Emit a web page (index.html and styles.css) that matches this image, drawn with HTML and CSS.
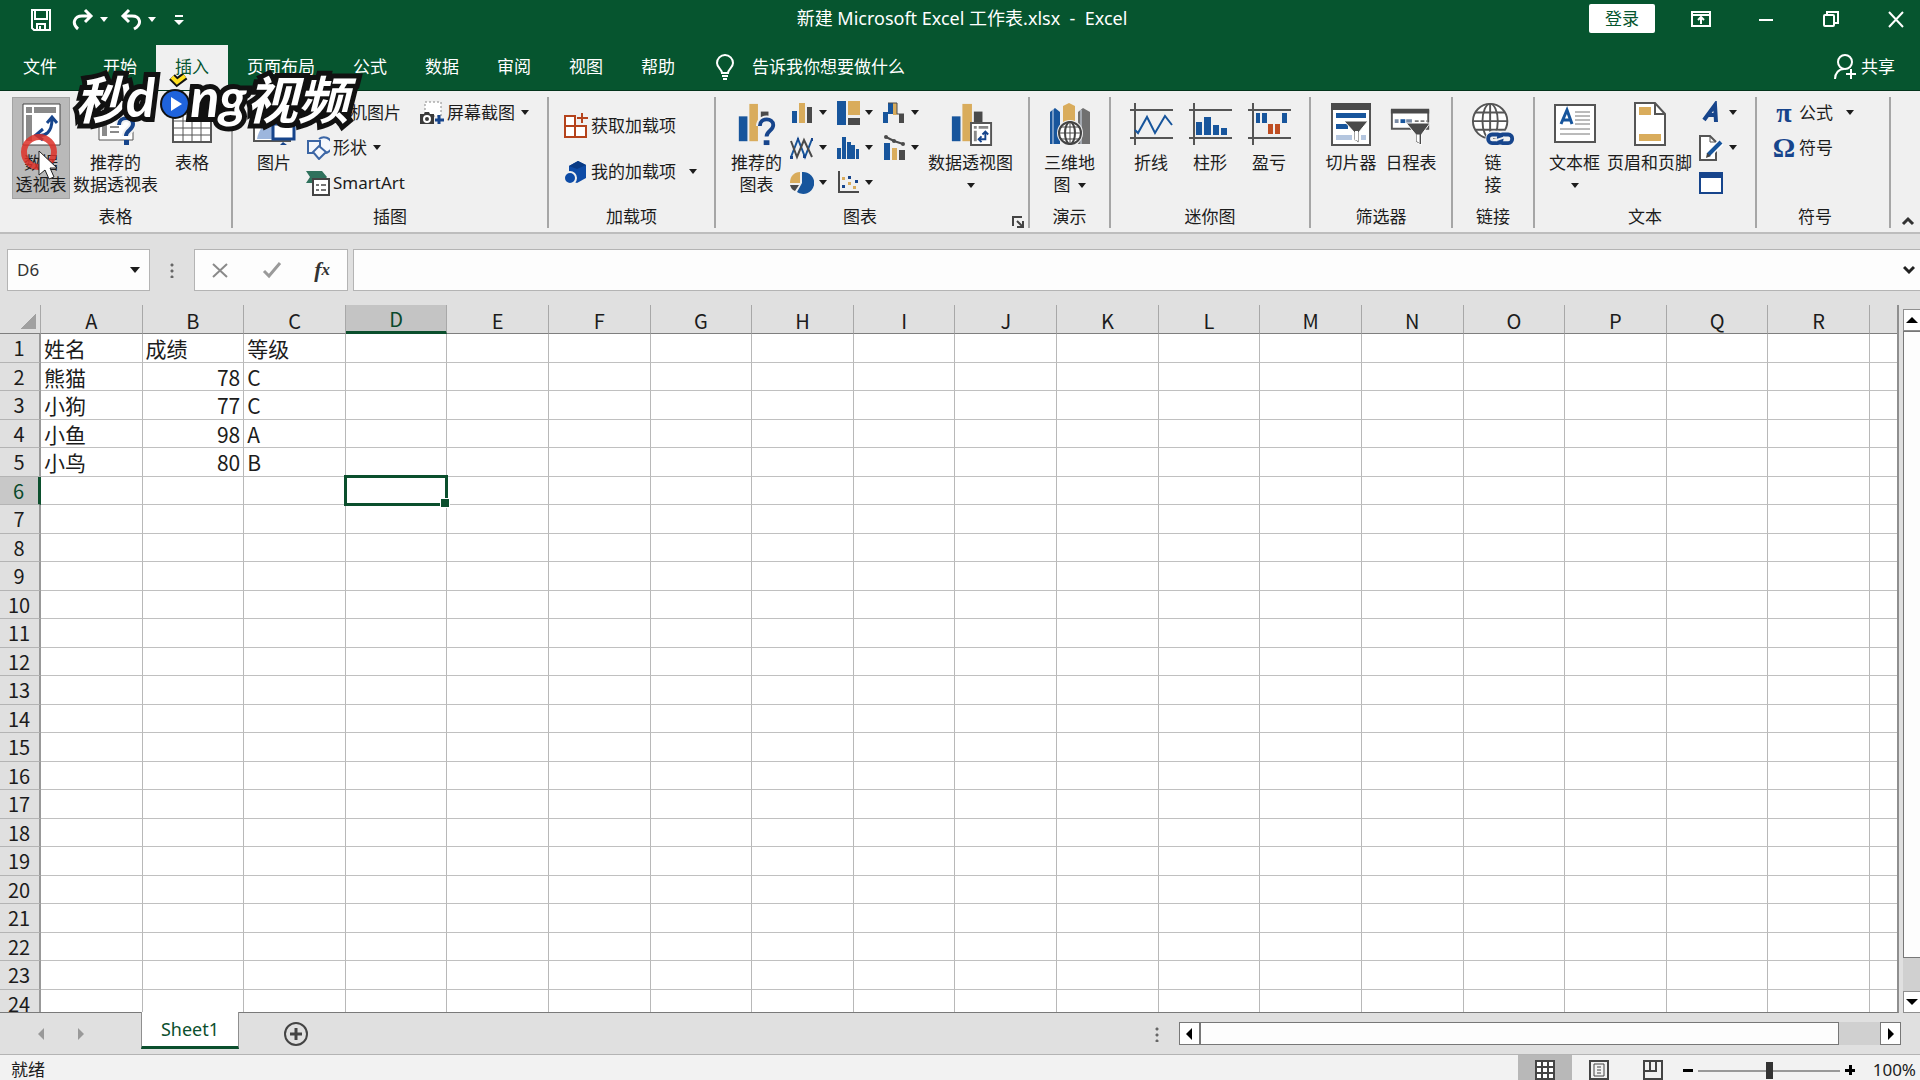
FILE: index.html
```html
<!DOCTYPE html>
<html lang="zh-CN">
<head>
    <meta charset="UTF-8">
    <meta name="viewport" content="width=device-width, initial-scale=1.0">
    <title>新建 Microsoft Excel 工作表.xlsx - Excel</title>
    <link rel="stylesheet" href="styles.css">
</head>
<body>
    <header class="titlebar">
        <div class="quick">
            <button class="save" aria-label="保存"><svg width="22" height="24" viewBox="0 0 22 24" fill="none" stroke="#fff" stroke-width="2"><path d="M2 2h18v20H4l-2-2zM5 2v9h12V2M7 22v-6h8v6M10 18v4"/></svg></button>
            <button class="redo" aria-label="恢复"><svg width="22" height="24" viewBox="0 0 22 24" fill="none" stroke="#fff" stroke-width="3"><path d="M6 21C-1 15 3 8 10 8h8M13 2l6 6-6 6"/></svg><i class="caret"></i></button>
            <button class="undo" aria-label="撤消"><svg width="22" height="24" viewBox="0 0 22 24" fill="none" stroke="#fff" stroke-width="3"><path d="M14 21C23 16 20 8 12 8H4M9 2L3 8l6 6"/></svg><i class="caret"></i></button>
            <button class="more" aria-label="自定义"><svg width="10" height="12" viewBox="0 0 10 12" fill="#fff"><path d="M1 1h8v2H1zM0 6h10l-5 5z"/></svg></button>
        </div>
        <div class="doc-title">新建 Microsoft Excel 工作表.xlsx&nbsp; -&nbsp; Excel</div>
        <div class="window-buttons">
            <button class="login">登录</button>
            <button aria-label="功能区选项"><svg width="20" height="18" viewBox="0 0 20 18" fill="none" stroke="#fff" stroke-width="2"><path d="M1 2h18v14H1zM1 5h18M10 14V8M7 10l3-3 3 3"/></svg></button>
            <button aria-label="最小化"><svg width="20" height="18" viewBox="0 0 20 18" stroke="#fff" stroke-width="2"><path d="M3 10h14"/></svg></button>
            <button aria-label="还原"><svg width="20" height="18" viewBox="0 0 20 18" fill="none" stroke="#fff" stroke-width="2"><rect x="3" y="5" width="10" height="11" rx="1"/><path d="M6 5V2h11v11h-4"/></svg></button>
            <button aria-label="关闭"><svg width="20" height="18" viewBox="0 0 20 18" stroke="#fff" stroke-width="2"><path d="M3 2l14 15M17 2L3 17"/></svg></button>
        </div>
    </header>

    <nav class="tabs">
        <button class="tab file">文件</button>
        <button class="tab">开始</button>
        <button class="tab active">插入</button>
        <button class="tab">页面布局</button>
        <button class="tab">公式</button>
        <button class="tab">数据</button>
        <button class="tab">审阅</button>
        <button class="tab">视图</button>
        <button class="tab">帮助</button>
        <button class="tell"><svg width="18" height="26" viewBox="0 0 18 26" fill="none" stroke="#fff" stroke-width="2"><path d="M6 19c0-4-5-5-5-10a8 8 0 0 1 16 0c0 5-5 6-5 10zM6 22h6M7 25h4"/></svg>告诉我你想要做什么</button>
        <button class="share"><svg width="22" height="26" viewBox="0 0 22 26" fill="none" stroke="#fff" stroke-width="2"><circle cx="11" cy="8" r="7"/><path d="M1 25c0-6 4-10 9-10M17 15v10M12 20h10"/></svg>共享</button>
    </nav>

    <section class="ribbon">
        <div class="group">
            <div class="items g-tables">
                <button class="big pressed">
                    <svg width="40" height="44" viewBox="0 0 40 44"><path d="M2 2h37v41H2z" fill="#fff" stroke="#444" stroke-width="1"/><path d="M5 5h6v6H5zM13 5h22v6H13zM5 13h6v26H5z" fill="#8a8a8a"/><path d="M15 33c10 2 16-3 16-16M26 21l5-6 5 6M22 27l-7 6 7 5" fill="none" stroke="#17458c" stroke-width="3"/></svg>
                    <span>数据</span><span>透视表</span>
                </button>
                <button class="big">
                    <svg width="40" height="44" viewBox="0 0 40 44"><path d="M3 2h34v36H3z" fill="#fff" stroke="#555"/><path d="M6 5h5v5H6zM13 5h20v5H13zM6 13h5v21H6zM14 24h9v2h-9zM14 29h9v2h-9z" fill="#8a8a8a"/><path d="M23 23c0-9 14-9 14-1 0 6-7 6-7 12" fill="none" stroke="#f0f0f0" stroke-width="8"/><path d="M23 23c0-9 14-9 14-1 0 6-7 6-7 12" fill="none" stroke="#17458c" stroke-width="4"/><path d="M28 38h5v5h-5z" fill="#17458c"/></svg>
                    <span>推荐的</span><span>数据透视表</span>
                </button>
                <button class="big">
                    <svg width="40" height="44" viewBox="0 0 40 44" fill="none" stroke="#555" stroke-width="2"><path d="M1 4h38v36H1z" fill="#fff"/><path d="M1 12h38M1 19h38M1 26h38M1 33h38M11 12v28M20 12v28M29 12v28" stroke-width="1"/></svg>
                    <span>表格</span>
                </button>
            </div>
            <div class="label">表格</div>
        </div>

        <div class="group">
            <div class="items g-pics">
                <button class="big">
                    <svg width="44" height="44" viewBox="0 0 44 44"><path d="M2 4h36v35H2z" fill="#fff" stroke="#555" stroke-width="2"/><path d="M5 37c1-9 9-18 15-19v19z" fill="#9db6dd"/><path d="M21 22h21v15H21z" fill="#fff" stroke="#17458c" stroke-width="3"/><path d="M28 43l3-3 4 3z" fill="#17458c"/></svg>
                    <span>图片</span>
                </button>
                <div class="stack">
                    <button class="small"><svg width="24" height="24" viewBox="0 0 24 24" fill="#fff" stroke="#555"><path d="M2 3h20v17H2z"/></svg>联机图片</button>
                    <button class="small"><svg width="24" height="24" viewBox="0 0 24 24" fill="#f4f7fc" stroke="#3c66a5" stroke-width="2"><path d="M13 3a8 8 0 1 1 3 14"/><path d="M2 5h12v12H2z"/><path d="M13 10l7 6-7 7-6-7z"/></svg>形状<i class="caret"></i></button>
                    <button class="small"><svg width="24" height="26" viewBox="0 0 24 26"><path d="M0 1h16l5 6-5 6H0l4-6z" fill="#2f715c"/><path d="M7 9h16v16H7z" fill="#fff" stroke="#444" stroke-width="2"/><path d="M10 14h3v2h-3zM15 14h5v2h-5zM10 19h3v2h-3zM15 19h5v2h-5z" fill="#777"/></svg>SmartArt</button>
                </div>
                <div class="stack">
                    <button class="small"><svg width="24" height="24" viewBox="0 0 24 24"><path d="M5 1h16v14H5z" fill="#fff" stroke="#888" stroke-dasharray="2 2"/><path d="M0 13h4l1-2h4l1 2h4v10H0z" fill="#3a3a3a"/><circle cx="7" cy="18" r="3" fill="none" stroke="#fff" stroke-width="2"/><path d="M19 14v9M15 19h9" stroke="#17458c" stroke-width="3"/></svg>屏幕截图<i class="caret"></i></button>
                </div>
            </div>
            <div class="label">插图</div>
        </div>

        <div class="group">
            <div class="items g-addins">
                <button class="small"><svg width="24" height="26" viewBox="0 0 24 26" fill="#fff" stroke="#b5431c" stroke-width="2"><path d="M1 3h10v10H1zM1 13h10v11H1zM11 13h11v11H11z"/><path d="M18 0v10M13 5h11"/></svg>获取加载项</button>
                <button class="small"><svg width="24" height="26" viewBox="0 0 24 26"><path d="M5 7l9-5 8 4v13l-9 5-8-3z" fill="#0d4ba6"/><path d="M5 7l9-5 8 4-9 4z" fill="#083a85"/><circle cx="6" cy="19" r="6" fill="#0d4ba6" stroke="#f0f0f0" stroke-width="2"/></svg>我的加载项<i class="caret far"></i></button>
            </div>
            <div class="label">加载项</div>
        </div>

        <div class="group charts">
            <div class="items g-charts">
                <button class="big">
                    <svg width="42" height="46" viewBox="0 0 42 46"><path d="M2 15h9v26H2z" fill="#17559c"/><path d="M13 2h9v39h-9z" fill="#d9ac5c"/><path d="M25 10h8v6h-8z" fill="#4a4a4a"/><path d="M24 25c0-9 14-9 14-1 0 6-7 6-7 12" fill="none" stroke="#f0f0f0" stroke-width="8"/><path d="M24 25c0-9 14-9 14-1 0 6-7 6-7 12" fill="none" stroke="#17458c" stroke-width="4"/><path d="M28 40h6v5h-6z" fill="#17458c"/></svg>
                    <span>推荐的</span><span>图表</span>
                </button>
                <div class="minis">
                    <button class="mini" aria-label="柱形图"><svg width="24" height="26" viewBox="0 0 24 26"><path d="M2 11h5v12H2z" fill="#17559c"/><path d="M9 3h6v20H9z" fill="#d9ac5c"/><path d="M17 7h5v16h-5z" fill="#4a4a4a"/></svg><i class="caret"></i></button>
                    <button class="mini" aria-label="层次结构图"><svg width="24" height="26" viewBox="0 0 24 26"><path d="M1 1h9v24H1z" fill="#17559c"/><path d="M12 1h12v14H12z" fill="#d9ac5c"/><path d="M12 18h12v7H12z" fill="#4a4a4a"/></svg><i class="caret"></i></button>
                    <button class="mini" aria-label="瀑布图"><svg width="24" height="26" viewBox="0 0 24 26"><path d="M1 12h5v11H1zM6 3h5v11H6z" fill="#17559c"/><path d="M11 3h4v12h-4z" fill="#d9ac5c"/><path d="M17 14h5v9h-5z" fill="#4a4a4a"/><path d="M6 3h9v11h7" fill="none" stroke="#4a4a4a"/></svg><i class="caret"></i></button>
                    <button class="mini" aria-label="折线图"><svg width="24" height="26" viewBox="0 0 24 26" fill="none" stroke-width="2"><path d="M1 22L8 4l7 18 7-18" stroke="#17559c"/><path d="M1 6l6 16 7-17 8 17" stroke="#4a4a4a"/><path d="M0 21h3v3H0zM13 20h3v3h-3zM21 3h2v3h-2zM7 3h2v3H7z" fill="#17458c"/></svg><i class="caret"></i></button>
                    <button class="mini" aria-label="统计图"><svg width="24" height="26" viewBox="0 0 24 26" fill="#17559c"><path d="M1 13h4v11H1zM6 2h4v22H6zM11 7h4v17h-4zM15 10h4v14h-4zM20 14h3v10h-3z"/></svg><i class="caret"></i></button>
                    <button class="mini" aria-label="组合图"><svg width="24" height="26" viewBox="0 0 24 26"><path d="M2 8h6v17H2z" fill="#17559c"/><path d="M10 13h5v12h-5z" fill="#d9ac5c"/><path d="M17 15h6v10h-6z" fill="#4a4a4a"/><path d="M4 2l8 4 9 3" fill="none" stroke="#4a4a4a" stroke-width="2"/><circle cx="4" cy="2" r="2" fill="#4a4a4a"/><circle cx="12" cy="6" r="2" fill="#4a4a4a"/><circle cx="21" cy="9" r="2" fill="#4a4a4a"/></svg><i class="caret"></i></button>
                    <button class="mini" aria-label="饼图"><svg width="24" height="26" viewBox="0 0 24 26"><path d="M12 2a11 11 0 1 1-5 20l5-9z" fill="#17559c"/><path d="M10 2v11H0C0 6 4 2 10 2z" fill="#d9ac5c"/><path d="M0 15h9l-4 6c-3-1-4-3-5-6z" fill="#4a4a4a"/></svg><i class="caret"></i></button>
                    <button class="mini" aria-label="散点图"><svg width="24" height="26" viewBox="0 0 24 26"><path d="M3 1v21h20" fill="none" stroke="#4a4a4a" stroke-width="2"/><path d="M12 6h3v3h-3zM19 10h3v3h-3zM6 15h3v3H6z" fill="#17458c"/><path d="M6 7h3v3H6zM12 12h3v3h-3zM17 16h3v3h-3z" fill="#d9ac5c"/></svg><i class="caret"></i></button>
                </div>
                <button class="big">
                    <svg width="44" height="46" viewBox="0 0 44 46"><path d="M2 15h9v26H2z" fill="#17559c"/><path d="M13 2h10v39H13z" fill="#d9ac5c"/><path d="M25 10h9v12h-9z" fill="#4a4a4a"/><path d="M22 22h21v23H22z" fill="#fff" stroke="#555" stroke-width="2"/><path d="M25 25h3v3h-3zM30 25h10v3H30zM25 30h3v11h-3z" fill="#888"/><path d="M31 39h6v-7M34 34l3-3 3 3M33 36l-3 3 3 3" fill="none" stroke="#17458c" stroke-width="2"/></svg>
                    <span>数据透视图</span><span><i class="caret"></i></span>
                </button>
            </div>
            <div class="label">图表<button class="launcher" aria-label="图表选项"><svg width="12" height="12" viewBox="0 0 12 12" fill="none" stroke="#444" stroke-width="2"><path d="M1 10V1h9M5 5l5 5M11 5v6H5"/></svg></button></div>
        </div>

        <div class="group">
            <div class="items centered">
                <button class="big">
                    <svg width="42" height="44" viewBox="0 0 42 44"><path d="M1 10l5-4 5 4v32H1z" fill="#17559c"/><path d="M14 4l6-3 6 3v18H14z" fill="#d9ac5c"/><path d="M29 10l5-4 7 4v32H29z" fill="#707070"/><path d="M4 7v35M32 8v34" stroke="#d6e0ee"/><circle cx="21" cy="31" r="13" fill="#f0f0f0"/><g fill="#fff" stroke="#444" stroke-width="2"><circle cx="21" cy="31" r="11"/><ellipse cx="21" cy="31" rx="5" ry="11"/><path d="M10 31h22M12 25h18M12 37h18M21 20v22" stroke-width="1"/></g></svg>
                    <span>三维地</span><span>图<i class="caret"></i></span>
                </button>
            </div>
            <div class="label">演示</div>
        </div>

        <div class="group">
            <div class="items centered">
                <button class="big spark"><svg width="44" height="44" viewBox="0 0 44 44" fill="none" stroke="#555" stroke-width="2"><path d="M6 1v42M1 8h43M1 36h43"/><path d="M6 28l3 3 9-16 8 16 10-17 7 9" stroke="#17559c"/></svg><span>折线</span></button>
                <button class="big spark"><svg width="44" height="44" viewBox="0 0 44 44" fill="none" stroke="#555" stroke-width="2"><path d="M6 1v42M1 8h43M1 36h43"/><path d="M8 20h6v13H8zM16 15h7v18h-7zM25 23h6v10h-6zM33 26h6v7h-6z" fill="#17559c" stroke="none"/></svg><span>柱形</span></button>
                <button class="big spark"><svg width="44" height="44" viewBox="0 0 44 44" fill="none" stroke="#555" stroke-width="2"><path d="M6 1v42M1 8h43M1 36h43"/><path d="M9 11h4v10H9zM15 11h5v10h-5zM35 11h5v10h-5z" fill="#17559c" stroke="none"/><path d="M21 22h5v10h-5zM28 22h5v10h-5z" fill="#bf4e22" stroke="none"/></svg><span>盈亏</span></button>
            </div>
            <div class="label">迷你图</div>
        </div>

        <div class="group">
            <div class="items centered">
                <button class="big filter"><svg width="42" height="44" viewBox="0 0 42 44"><path d="M2 2h38v41H2z" fill="#fff" stroke="#555" stroke-width="2"/><path d="M1 1h40v7H1z" fill="#4a4a4a"/><path d="M6 11h30v5H6zM6 22h12v5H6z" fill="#17559c"/><path d="M6 33h16v5H6zM31 33h5v5h-5z" fill="#b4c6df"/><path d="M14 19h24l-9 11v11l-5-3v-8z" fill="#4a4a4a" stroke="#fff"/><path d="M25 29h3v10l-3-1z" fill="#fff"/></svg><span>切片器</span></button>
                <button class="big filter"><svg width="44" height="46" viewBox="0 0 44 46"><path d="M2 9h38v19H2z" fill="#fff" stroke="#555" stroke-width="2"/><path d="M1 7h40v5H1z" fill="#4a4a4a"/><path d="M5 18h4v4H5zM17 18h6v4h-6z" fill="#7a8ba4"/><path d="M11 18h5v4h-5z" fill="#17559c"/><path d="M26 20h13" stroke="#777" stroke-width="2" stroke-dasharray="4 2"/><path d="M17 22h25l-9 12v11l-6-3v-8z" fill="#4a4a4a" stroke="#fff"/><path d="M28 34h3v9l-3-2z" fill="#fff"/></svg><span>日程表</span></button>
            </div>
            <div class="label">筛选器</div>
        </div>

        <div class="group">
            <div class="items centered">
                <button class="big"><svg width="46" height="46" viewBox="0 0 46 46"><g fill="#fff" stroke="#555" stroke-width="2"><circle cx="20" cy="20" r="18"/><ellipse cx="20" cy="20" rx="8" ry="18" fill="none"/><path d="M2 20h36M5 11h30M5 29h30M20 2v36"/></g><g fill="none" stroke="#f0f0f0" stroke-width="8"><rect x="19" y="34" width="13" height="9" rx="4"/><rect x="30" y="34" width="13" height="9" rx="4"/></g><g fill="none" stroke="#17458c" stroke-width="4"><rect x="18" y="34" width="14" height="9" rx="4"/><rect x="29" y="34" width="14" height="9" rx="4"/></g><path d="M26 40l9-3" stroke="#f0f0f0" stroke-width="2"/></svg><span>链</span><span>接</span></button>
            </div>
            <div class="label">链接</div>
        </div>

        <div class="group">
            <div class="items g-text">
                <button class="big"><svg width="42" height="44" viewBox="0 0 42 44"><path d="M1 3h40v37H1z" fill="#fff" stroke="#555" stroke-width="2"/><path d="M7 22l6-14 5 14M9 18h8" fill="none" stroke="#17559c" stroke-width="3"/><path d="M21 10h15M21 14h15M21 18h15M21 22h15M6 27h30M6 32h30" stroke="#777"/></svg><span>文本框</span><span><i class="caret"></i></span></button>
                <button class="big"><svg width="32" height="44" viewBox="0 0 32 44"><path d="M1 1h20l10 11v31H1z" fill="#fff" stroke="#555" stroke-width="2"/><path d="M21 1v11h10" fill="none" stroke="#555" stroke-width="2"/><path d="M5 5h12v8H5zM5 32h22v7H5z" fill="#d9ac5c"/></svg><span>页眉和页脚</span></button>
                <div class="stack">
                    <button class="small" aria-label="艺术字"><svg width="24" height="24" viewBox="0 0 24 24" fill="none" stroke="#17458c" stroke-width="4"><path d="M5 19L16 4l1 17M9 14h8"/></svg><i class="caret"></i></button>
                    <button class="small" aria-label="签名行"><svg width="24" height="26" viewBox="0 0 24 26"><path d="M1 1h10l6 6v18H1z" fill="#fff" stroke="#555" stroke-width="2"/><path d="M11 1v6h6" fill="none" stroke="#555"/><path d="M8 21L22 7" stroke="#fff" stroke-width="7"/><path d="M9 20L22 7" stroke="#17559c" stroke-width="4"/><path d="M7 23l1-5 4 3z" fill="#444"/></svg><i class="caret"></i></button>
                    <button class="small" aria-label="对象"><svg width="24" height="24" viewBox="0 0 24 24"><path d="M1 2h22v20H1z" fill="#fff" stroke="#17458c" stroke-width="2"/><path d="M0 1h24v6H0z" fill="#17458c"/></svg></button>
                </div>
            </div>
            <div class="label">文本</div>
        </div>

        <div class="group symbols">
            <div class="items g-symbols">
                <div class="stack">
                    <button class="small"><b class="glyph">π</b>公式<i class="caret far"></i></button>
                    <button class="small"><b class="glyph">Ω</b>符号</button>
                </div>
            </div>
            <div class="label">符号</div>
        </div>
        <div class="collapse"><button aria-label="折叠功能区"><svg width="14" height="10" viewBox="0 0 14 10" fill="none" stroke="#333" stroke-width="3"><path d="M2 8l5-5 5 5"/></svg></button></div>
    </section>

    <section class="formula-bar">
        <div class="name-box"><input type="text" value="D6" aria-label="名称框"><button aria-label="选择名称"><i class="caret wide"></i></button></div>
        <div class="dots"></div>
        <div class="fx-box">
            <button aria-label="取消"><svg width="18" height="18" viewBox="0 0 18 18" stroke="#8a8a8a" stroke-width="2"><path d="M2 3l14 13M16 3L2 16"/></svg></button>
            <button aria-label="输入"><svg width="20" height="18" viewBox="0 0 20 18" fill="none" stroke="#9a9a9a" stroke-width="3"><path d="M2 10l5 5L18 2"/></svg></button>
            <button class="fx" aria-label="插入函数">f<small>x</small></button>
        </div>
        <div class="formula"><input type="text" aria-label="编辑栏"><button aria-label="展开编辑栏"><svg width="12" height="10" viewBox="0 0 12 10" fill="none" stroke="#222" stroke-width="3"><path d="M1 2l5 5 5-5"/></svg></button></div>
    </section>

    <main class="workspace">
        <div class="sheet">
            <table id="sheetTable">
                <thead></thead>
                <tbody></tbody>
            </table>
        </div>
        <div class="vscroll">
            <button aria-label="向上"><svg width="12" height="8"><path d="M0 7l6-6 6 6z"/></svg></button>
            <div class="vthumb"></div>
            <div class="vtrack"></div>
            <button aria-label="向下"><svg width="12" height="8"><path d="M0 1l6 6 6-6z"/></svg></button>
        </div>
    </main>

    <section class="sheet-bar">
        <div class="sheet-nav">
            <button aria-label="上一个"><svg width="8" height="12" fill="#999"><path d="M7 0v12L1 6z"/></svg></button>
            <button aria-label="下一个"><svg width="8" height="12" fill="#999"><path d="M1 0v12l6-6z"/></svg></button>
        </div>
        <button class="sheet-tab">Sheet1</button>
        <button class="add-sheet" aria-label="新工作表"><svg width="24" height="24" viewBox="0 0 24 24" fill="none" stroke="#444" stroke-width="2"><circle cx="12" cy="12" r="11"/><path d="M12 6v12M6 12h12" stroke-width="3"/></svg></button>
        <div class="dots"></div>
        <div class="hscroll">
            <button aria-label="向左"><svg width="8" height="12"><path d="M7 0v12L1 6z"/></svg></button>
            <div class="hthumb"></div>
            <div class="htrack"></div>
            <button aria-label="向右"><svg width="8" height="12"><path d="M1 0v12l6-6z"/></svg></button>
        </div>
    </section>

    <footer class="status">
        <span class="ready">就绪</span>
        <button class="view on" aria-label="普通"><svg width="20" height="20" viewBox="0 0 20 20" fill="#fff" stroke="#444" stroke-width="2"><path d="M1 1h18v18H1zM7 1v18M13 1v18M1 7h18M1 13h18"/></svg></button>
        <button class="view" aria-label="页面布局"><svg width="20" height="20" viewBox="0 0 20 20" fill="none" stroke="#444" stroke-width="2"><path d="M1 1h18v18H1z"/><path d="M5 4h10v12H5zM8 7h4M8 10h4M8 13h4" stroke-width="1"/></svg></button>
        <button class="view" aria-label="分页预览"><svg width="20" height="20" viewBox="0 0 20 20" fill="none" stroke="#444" stroke-width="2"><path d="M1 1h18v18H1zM1 11h12V1M7 1v10"/></svg></button>
        <button class="zoom-btn" aria-label="缩小"><svg width="12" height="12"><path d="M1 5h10v3H1z"/></svg></button>
        <input class="zoom" type="range" min="0" max="200" value="100" aria-label="缩放">
        <button class="zoom-btn" aria-label="放大"><svg width="12" height="12"><path d="M1 5h10v3H1zM5 1h3v10H5z"/></svg></button>
        <span class="percent">100%</span>
    </footer>

    <!-- watermark and pointer lie over the ribbon -->
    <div class="watermark">
        <span class="wm-cn">秒</span><span class="wm-en">d</span>
        <svg width="30" height="46" viewBox="0 0 30 46"><circle cx="15" cy="30" r="15" fill="#111"/><circle cx="15" cy="30" r="13" fill="#1f63dc"/><path d="M11 23v14l11-7z" fill="#fff"/><path d="M12 3l5 5 8-6" fill="none" stroke="#111" stroke-width="8"/><path d="M12 3l5 5 8-6" fill="none" stroke="#ffdf1c" stroke-width="4"/></svg>
        <span class="wm-en">ng</span><span class="wm-cn">视频</span>
    </div>
    <svg class="pointer" width="48" height="48" viewBox="0 0 48 48"><circle cx="20" cy="20" r="15" fill="none" stroke="#dd3028" stroke-opacity=".85" stroke-width="6"/><path d="M20 19v24l6-5 4 9 5-2-4-9h7z" fill="#fff" stroke="#222"/></svg>

    <script>
        const columns = 'ABCDEFGHIJKLMNOPQR'.split('');
        const rows = [
            ['姓名', '成绩', '等级'],
            ['熊猫', 78, 'C'],
            ['小狗', 77, 'C'],
            ['小鱼', 98, 'A'],
            ['小鸟', 80, 'B']
        ];
        const selected = { row: 6, col: 3 };

        function buildHead() {
            const cells = columns.map((name, i) =>
                `<th class="${i === selected.col ? 'current' : ''}">${name}</th>`).join('');
            document.querySelector('#sheetTable thead').innerHTML =
                `<tr><th class="corner"></th>${cells}<th class="rest"></th></tr>`;
        }

        function buildRows() {
            let html = '';
            for (let r = 1; r <= 24; r++) {
                const data = rows[r - 1] || [];
                html += `<tr><th class="${r === selected.row ? 'current' : ''}">${r}</th>`;
                for (let c = 0; c <= columns.length; c++) {
                    const value = data[c] === undefined ? '' : data[c];
                    const cls = r === selected.row && c === selected.col ? 'selected'
                        : typeof value === 'number' ? 'number' : '';
                    html += `<td class="${cls}">${value}</td>`;
                }
                html += '</tr>';
            }
            document.querySelector('#sheetTable tbody').innerHTML = html;
        }

        buildHead();
        buildRows();
    </script>
</body>
</html>
```
FILE: styles.css
```css
* {
    box-sizing: border-box;
}
body {
    margin: 0;
    height: 100vh;
    display: flex;
    flex-direction: column;
    overflow: hidden;
    background: #e0e0e0;
    color: #1c1c1c;
    font-family: "Noto Sans", "Noto Sans CJK SC", sans-serif;
    font-size: 17px;
    line-height: 22px;
}
button, input {
    font: inherit;
    color: inherit;
    background: none;
    border: none;
    padding: 0;
    margin: 0;
    outline: none;
}
button {
    display: flex;
    align-items: center;
    justify-content: center;
    white-space: nowrap;
}
svg {
    display: block;
    flex: none;
}
.caret {
    display: inline-block;
    flex: none;
    border: 4px solid transparent;
    border-top: 5px solid currentColor;
    border-bottom: none;
}
.caret.wide {
    border-width: 6px 5px 0;
}

/* title bar */
.titlebar {
    display: grid;
    grid-template-columns: 1fr auto 1fr;
    align-items: center;
    flex: none;
    height: 37px;
    background: #06552f;
    color: #fff;
}
.doc-title {
    padding: 0 0 2px 4px;
    font-size: 18px;
}
.quick {
    display: flex;
    align-items: center;
    padding: 2px 0 0 30px;
}
.quick button {
    gap: 6px;
}
.quick .redo {
    margin-left: 20px;
}
.quick .undo {
    margin-left: 12px;
}
.quick .more {
    margin-left: 18px;
}
.window-buttons {
    display: flex;
    align-items: center;
    justify-content: flex-end;
    gap: 45px;
    padding-right: 14px;
}
.window-buttons .login {
    width: 66px;
    height: 29px;
    margin-right: -9px;
    background: #fff;
    color: #06552f;
    border-radius: 2px;
}

/* tabs */
.tabs {
    display: flex;
    align-items: flex-end;
    flex: none;
    height: 54px;
    padding: 0 25px 0 4px;
    background: #06552f;
    color: #fff;
    border-bottom: 1px solid #03341c;
}
.tab {
    height: 45px;
    padding: 0 19px 2px;
}
.tab.file {
    margin-right: 8px;
}
.tab.active {
    background: #f0f0f0;
    color: #06552f;
}
.tell, .share {
    height: 45px;
    padding-bottom: 2px;
}
.tell {
    gap: 18px;
    margin-left: 22px;
}
.share {
    gap: 5px;
    margin-left: auto;
}

/* ribbon */
.ribbon {
    display: grid;
    grid-template-columns: 233px 316px 167px 314px 81px 200px 142px 82px 222px 134px 1fr;
    flex: none;
    padding: 6px 0 4px;
    background: #f0f0f0;
    border-bottom: 2px solid #bdbdbd;
}
.group {
    border-right: 2px solid #a6a6a6;
}
.items {
    display: flex;
    height: 109px;
}
.centered {
    justify-content: center;
}
.label {
    display: flex;
    justify-content: center;
    position: relative;
    height: 22px;
}
.launcher {
    position: absolute;
    right: 4px;
    bottom: 0;
}
.big {
    flex-direction: column;
    justify-content: flex-start;
    height: 102px;
    padding-top: 5px;
}
.big svg {
    height: 44px;
    margin-bottom: 6px;
}
.big span {
    display: flex;
    align-items: center;
    justify-content: center;
    gap: 7px;
    height: 22px;
}
.pressed {
    width: 58px;
    background: #b9b9b9;
    border: 1px solid #a3a3a3;
    padding-top: 4px;
}
.stack {
    display: flex;
    flex-direction: column;
    margin-top: -2px;
}
.small {
    justify-content: flex-start;
    gap: 3px;
    height: 35px;
}
.small .caret {
    margin-left: 3px;
}
.small .caret.far {
    margin-left: 10px;
}
.g-tables {
    padding-left: 12px;
    gap: 3px;
}
.g-tables .big:last-child {
    margin-left: 11px;
}
.g-pics {
    padding-left: 19px;
}
.g-pics .stack {
    margin-left: 10px;
}
.g-pics .stack + .stack {
    margin-left: 15px;
}
.g-addins {
    flex-direction: column;
    gap: 11px;
    padding: 11px 0 0 15px;
}
.g-charts {
    padding-left: 15px;
}
.charts .label {
    padding-right: 24px;
}
.minis {
    display: grid;
    grid-template-columns: repeat(3, 46px);
    grid-auto-rows: 35px;
    margin: -2px 0 0 8px;
}
.mini {
    justify-content: flex-start;
    gap: 5px;
}
.spark {
    width: 59px;
}
.filter {
    width: 60px;
}
.g-text {
    padding-left: 14px;
}
.g-text .big + .big {
    margin-left: 7px;
}
.g-text .stack {
    margin-left: 7px;
}
.g-symbols {
    padding-left: 15px;
}
.symbols .label {
    padding-right: 16px;
}
.glyph {
    width: 24px;
    color: #17458c;
    font-family: "Liberation Serif", serif;
    font-size: 28px;
    text-align: center;
}
.collapse {
    display: flex;
    align-items: flex-end;
    justify-content: flex-end;
    padding: 0 5px 2px 0;
}

/* formula bar */
.formula-bar {
    display: flex;
    align-items: center;
    flex: none;
    padding: 15px 0 14px 7px;
}
.name-box, .fx-box, .formula {
    display: flex;
    align-items: center;
    height: 42px;
    background: #fdfdfd;
    border: 1px solid #b4b4b4;
}
.name-box {
    width: 143px;
    padding: 0 9px;
}
.name-box input {
    flex: 1;
    min-width: 0;
    color: #333;
}
.dots {
    width: 4px;
    height: 16px;
    background: radial-gradient(circle, #666 1px, transparent 2px) 0 0 / 4px 6px;
}
.formula-bar .dots {
    margin: 0 20px;
}
.fx-box {
    width: 154px;
    justify-content: space-between;
    padding: 0 17px 0 16px;
}
.fx {
    font-family: "Liberation Serif", serif;
    font-size: 22px;
    font-style: italic;
    font-weight: bold;
    color: #333;
}
.fx small {
    font-size: 17px;
}
.formula {
    flex: 1;
    margin-left: 5px;
    padding-right: 5px;
    border-right: none;
}
.formula input {
    flex: 1;
    padding-left: 8px;
}

/* sheet */
.workspace {
    display: flex;
    flex: 1;
    min-height: 0;
}
.sheet {
    flex: 1;
    overflow: hidden;
    background: linear-gradient(#e0e0e0 29px, #fff 29px);
    border-right: 2px solid #8f8f8f;
    border-bottom: 1px solid #7a7a7a;
}
table {
    width: 100%;
    table-layout: fixed;
    border-collapse: separate;
    border-spacing: 0;
    font-family: "Noto Sans CJK SC", sans-serif;
    font-size: 21px;
    line-height: 24px;
}
tbody tr {
    height: 28px;
}
tbody tr:nth-child(odd) {
    height: 29px;
}
th {
    padding: 0;
    font-size: 20px;
    font-weight: normal;
    background: #e0e0e0;
}
thead th {
    height: 29px;
    padding-top: 4px;
    border-right: 1px solid #a8a8a8;
    border-bottom: 1px solid #7f7f7f;
}
thead .current {
    padding-top: 2px;
    background: #c4c4c4;
    color: #0a4a2c;
    border-bottom: 3px solid #0b4f2d;
}
.corner {
    width: 41px;
    background: linear-gradient(135deg, transparent 50%, #a0a0a0 50%) 21px 9px / 15px 15px no-repeat #e0e0e0;
}
.rest {
    width: 27px;
    border-right: none;
}
tbody th {
    padding-right: 1px;
    border-right: 2px solid #999;
    border-bottom: 1px solid #b4b4b4;
}
tbody .current {
    background: #c8c8c8;
    color: #0a4a2c;
    border-right: 3px solid #0b4f2d;
}
td {
    padding: 0 3px;
    white-space: nowrap;
    border-right: 1px solid #b8b8b8;
    border-bottom: 1px solid #c0c0c0;
}
td:last-child {
    border-right: none;
}
.number {
    text-align: right;
}
.selected {
    position: relative;
}
.selected::before {
    content: "";
    position: absolute;
    inset: -2px;
    border: 3px solid #0b4f2d;
}
.selected::after {
    content: "";
    position: absolute;
    right: -4px;
    bottom: -4px;
    width: 8px;
    height: 8px;
    background: #0b4f2d;
    border: 1px solid #fff;
}
.vscroll {
    display: flex;
    flex-direction: column;
    width: 17px;
    margin: 4px 0 0 4px;
    background: #d0d0d0;
}
.vscroll button {
    height: 22px;
    background: #fff;
    border: 1px solid #8f8f8f;
    border-right: none;
}
.vthumb {
    flex: 95;
    background: #fdfdfd;
    border: 1px solid #777;
    border-right: none;
}
.vtrack {
    flex: 5;
}

/* sheet tabs */
.sheet-bar {
    display: flex;
    align-items: center;
    flex: none;
    height: 42px;
    padding-right: 19px;
    border-bottom: 1px solid #b4b4b4;
}
.sheet-nav {
    display: flex;
    gap: 32px;
    width: 141px;
    padding-left: 37px;
}
.sheet-tab {
    align-self: flex-start;
    width: 98px;
    height: 37px;
    margin-top: -1px;
    background: #fff;
    color: #0b4f2d;
    font-size: 18px;
    border: 1px solid #8f8f8f;
    border-top: none;
    border-bottom: 3px solid #0b4f2d;
}
.add-sheet {
    margin-left: 45px;
}
.sheet-bar .dots {
    margin: 0 20px 0 auto;
}
.hscroll {
    display: flex;
    width: 38%;
    height: 23px;
    background: #d0d0d0;
}
.hscroll button {
    width: 21px;
    background: #fff;
    border: 1px solid #777;
}
.hthumb {
    flex: 94;
    background: #fdfdfd;
    border: 1px solid #777;
}
.htrack {
    flex: 6;
}

/* status bar */
.status {
    display: flex;
    align-items: flex-start;
    flex: none;
    height: 25px;
    padding-right: 4px;
    overflow: hidden;
    background: #f2f2f2;
}
.ready {
    flex: 1;
    padding: 4px 0 0 11px;
}
.view {
    width: 54px;
    height: 30px;
}
.view.on {
    background: #b8b8b8;
}
.zoom-btn {
    width: 16px;
    height: 30px;
}
.zoom {
    appearance: none;
    width: 142px;
    height: 30px;
    margin: 0 2px;
    background: linear-gradient(#999, #999) 0 15px / 100% 2px no-repeat;
}
.zoom::-webkit-slider-thumb {
    appearance: none;
    width: 7px;
    height: 17px;
    background: #333;
}
.percent {
    width: 58px;
    padding-top: 4px;
    text-align: right;
}

/* overlays */
.watermark {
    position: absolute;
    left: 75px;
    top: 72px;
    display: flex;
    align-items: center;
    height: 50px;
    color: #fff;
    font-style: italic;
    font-weight: bold;
    -webkit-text-stroke: 10px #111;
    paint-order: stroke fill;
}
.watermark svg {
    margin-left: 5px;
}
.wm-cn {
    font-family: "Noto Sans CJK SC", sans-serif;
    font-size: 51px;
    line-height: 50px;
}
.wm-en {
    font-family: Lato, sans-serif;
    font-size: 54px;
    line-height: 50px;
}
.pointer {
    position: absolute;
    left: 19px;
    top: 132px;
}
```
